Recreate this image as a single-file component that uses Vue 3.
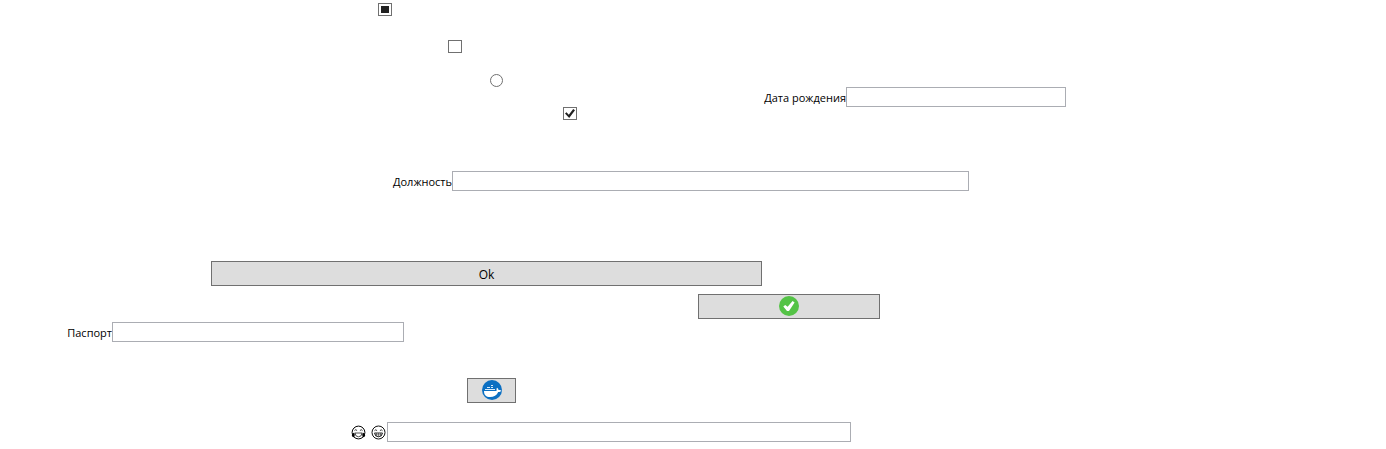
<script setup>
import { ref, onMounted } from 'vue'

const partial = ref(null)
const birthDate = ref('')
const position = ref('')
const passport = ref('')
const mood = ref('')

onMounted(() => {
  partial.value.indeterminate = true
})
</script>

<template>
  <form class="form" @submit.prevent>
    <div class="top">
      <div class="options">
        <div class="option partial"><input ref="partial" type="checkbox" class="check" aria-label="Option 1" /></div>
        <div class="option empty"><input type="checkbox" class="check" aria-label="Option 2" /></div>
        <div class="option choice"><input type="radio" class="radio" aria-label="Option 3" /></div>
        <div class="option ticked"><input type="checkbox" class="check" checked aria-label="Option 4" /></div>
      </div>
      <div class="field birth">
        <label for="birth">Дата рождения</label>
        <input id="birth" v-model="birthDate" type="text" class="text" />
      </div>
    </div>

    <div class="field position">
      <label for="position">Должность</label>
      <input id="position" v-model="position" type="text" class="text" />
    </div>

    <div class="action ok"><button type="submit" class="button caption">Ok</button></div>

    <div class="action accept">
      <button type="button" class="button icon" aria-label="Accept">
        <svg width="20" height="20" viewBox="0 0 20 20" aria-hidden="true">
          <circle cx="10" cy="10" r="10" fill="#54c346" />
          <path d="M4.3 10.6 6.2 9 8.6 10.8 13.6 5 15.6 6.6 10 15 8 15Z" fill="#fff" />
        </svg>
      </button>
    </div>

    <div class="field passport">
      <label for="passport">Паспорт</label>
      <input id="passport" v-model="passport" type="text" class="text" />
    </div>

    <div class="action docker">
      <button type="button" class="button icon" aria-label="Docker">
        <svg width="20" height="20" viewBox="0 0 20 20" aria-hidden="true">
          <circle cx="10" cy="10" r="10" fill="#0b6fc2" />
          <path d="M2 11H14.4C15 10.6 14 9 15 7.8 16 8.4 16.4 9 16.5 10 17.8 9.7 18.6 10 19.4 10.4 18.8 11.6 17.6 12 16.2 12 14.8 15.2 12 17 8 17 4 17 2 15 2 11Z" fill="#fff" />
          <path d="M3 9h10v1H3zM5 7h3v1H5zM9 7h2v1H9zM9 5h2v1H9z" fill="#d8eafa" />
        </svg>
      </button>
    </div>

    <div class="field mood">
      <label for="mood" class="faces" aria-label="Mood">
        <svg width="15" height="15" viewBox="0 0 15 15" aria-hidden="true">
          <circle cx="7.5" cy="7.5" r="6.4" fill="#fff" stroke="#000" />
          <path d="M3.5 5.6Q4.7 3.8 6.1 5.6M8.9 5.6Q10.3 3.8 11.5 5.6" fill="none" stroke="#222" stroke-width=".9" />
          <path d="M4 8H11Q10.8 11.8 7.5 11.8 4.2 11.8 4 8Z" fill="#fff" stroke="#222" stroke-width=".8" />
          <path d="M3.2 7.5Q.6 8.5.8 10.4 1.4 12.6 3.2 12 4.4 10.4 3.2 7.5ZM11.8 7.5Q14.4 8.5 14.2 10.4 13.6 12.6 11.8 12 10.6 10.4 11.8 7.5Z" />
        </svg>
        <svg width="15" height="15" viewBox="0 0 15 15" aria-hidden="true">
          <circle cx="7.5" cy="7.5" r="6.5" fill="#fff" stroke="#111" />
          <path d="M3.5 5.7Q4.7 3.9 6.1 5.7M8.9 5.7Q10.3 3.9 11.5 5.7" fill="none" stroke="#222" stroke-width=".9" />
          <path d="M3.5 8H11.5Q11.1 11.8 7.5 11.8 3.9 11.8 3.5 8Z" fill="#fff" stroke="#111" stroke-width=".9" />
          <path d="M4 9.8H11M5.5 8V11.2M7.5 8V11.8M9.5 8V11.2" fill="none" stroke="#222" stroke-width=".5" />
        </svg>
      </label>
      <input id="mood" v-model="mood" type="text" class="text" />
    </div>
  </form>
</template>

<style>
body {
  margin: 0;
  background: #fff;
}
</style>

<style scoped>
.form {
  font-family: "Open Sans", "Noto Sans", sans-serif;
  font-size: 12px;
  line-height: 16px;
  color: #000;
  padding: 3px 0 7px;
}

.top {
  display: grid;
  grid-template-columns: 600fr 786fr;
  align-items: start;
}

.option,
.field,
.action {
  display: grid;
}

.options .partial { grid-template-columns: 378fr 14px 208fr; }
.options .empty { grid-template-columns: 448fr 14px 138fr; margin-top: 24px; }
.options .choice { grid-template-columns: 490fr 14px 96fr; margin-top: 21px; }
.options .ticked { grid-template-columns: 563fr 14px 23fr; margin-top: 20px; }

.option input {
  grid-column: 2;
}

.check,
.radio {
  appearance: none;
  box-sizing: border-box;
  margin: 0;
  width: 14px;
  height: 13px;
  border: 1px solid #707070;
  background: #fff;
  display: grid;
  place-items: center;
}

.radio {
  width: 13px;
  border-radius: 50%;
}

.radio:checked::before {
  content: "";
  width: 7px;
  height: 7px;
  border-radius: 50%;
  background: #212121;
}

.check:indeterminate::before {
  content: "";
  width: 8px;
  height: 7px;
  background: #212121;
}

.check:checked::before {
  content: "";
  width: 10px;
  height: 9px;
  background: #212121;
  clip-path: polygon(0 50%, 15% 36%, 38% 63%, 82% 0, 100% 14%, 42% 100%);
}

.field label {
  grid-column: 1;
  justify-self: end;
  align-self: end;
  padding-bottom: 1px;
  font-size: 11px;
  white-space: nowrap;
}

.text {
  grid-column: 2;
  box-sizing: border-box;
  width: 100%;
  min-width: 0;
  height: 20px;
  margin: 0;
  padding: 0 2px;
  border: 1px solid #abadb3;
  border-radius: 0;
  background: #fff;
  font: inherit;
}

.birth { grid-template-columns: 246fr 220fr 320fr; margin-top: 84px; }
.position { grid-template-columns: 452fr 517fr 417fr; margin-top: 51px; }
.ok { grid-template-columns: 211fr 551fr 624fr; margin-top: 70px; }
.accept { grid-template-columns: 698fr 182fr 506fr; margin-top: 8px; }
.passport { grid-template-columns: 112fr 292fr 982fr; margin-top: 3px; }
.docker { grid-template-columns: 467fr 49fr 870fr; margin-top: 36px; }
.mood { grid-template-columns: 387fr 464fr 535fr; margin-top: 19px; }

.button {
  grid-column: 2;
  display: flex;
  align-items: center;
  justify-content: center;
  box-sizing: border-box;
  height: 25px;
  min-width: 0;
  margin: 0;
  padding: 0;
  border: 1px solid #707070;
  border-radius: 0;
  background: #ddd;
  color: #000;
  font: inherit;
}

.button.caption {
  padding-top: 2px;
}

.button.icon {
  padding-bottom: 1px;
}

.button svg,
.faces svg {
  display: block;
}

.field .faces {
  display: flex;
  gap: 5px;
  padding: 0 1px 2px 0;
}
</style>
